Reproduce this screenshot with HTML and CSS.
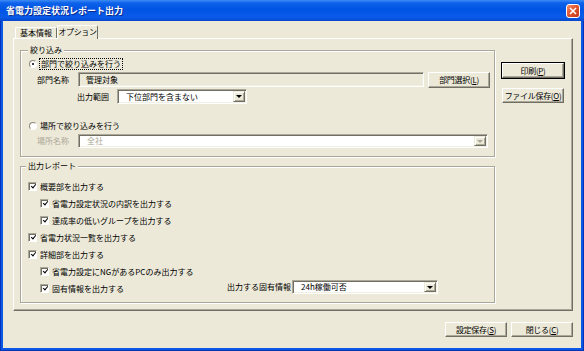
FILE: index.html
```html
<!DOCTYPE html>
<html lang="ja">
<head>
    <meta charset="UTF-8">
    <title>省電力設定状況レポート出力</title>
    <link rel="stylesheet" href="styles.css">
</head>
<body>
    <div class="window">
        <div class="titlebar">
            <span class="title">省電力設定状況レポート出力</span>
            <span class="close">
                <svg width="8" height="8" viewBox="0 0 8 8"><path d="M1 1 L7 7 M7 1 L1 7" stroke="#fff" stroke-width="1.6"/></svg>
            </span>
        </div>

        <div class="client">
            <!-- Tabs -->
            <div class="tabs">
                <div class="tab">基本情報</div>
                <div class="tab active">オプション</div>
            </div>

            <div class="panel">
                <div class="groups">
                    <!-- Filter -->
                    <div class="group group-filter">
                        <span class="legend">絞り込み</span>
                        <div class="radio-row">
                            <span class="radio checked"></span>
                            <span class="focus">部門で絞り込みを行う</span>
                        </div>
                        <div class="field-row">
                            <span class="label">部門名称</span>
                            <span class="field readonly w-dept">管理対象</span>
                            <span class="btn">部門選択(<u>L</u>)</span>
                        </div>
                        <div class="field-row range-row">
                            <span class="label w-range">出力範囲</span>
                            <span class="combo w-scope">
                                <span class="combo-text">下位部門を含まない</span>
                                <span class="drop"><i class="arrow"></i></span>
                            </span>
                        </div>
                        <div class="radio-row second">
                            <span class="radio"></span>
                            <span class="radio-text">場所で絞り込みを行う</span>
                        </div>
                        <div class="field-row place-row">
                            <span class="label disabled">場所名称</span>
                            <span class="combo disabled w-place">
                                <span class="combo-text">全社</span>
                                <span class="drop"><i class="arrow"></i></span>
                            </span>
                        </div>
                    </div>

                    <!-- Report -->
                    <div class="group group-report">
                        <span class="legend">出力レポート</span>
                        <div class="checks">
                            <div class="check-row"><span class="check"></span>概要部を出力する</div>
                            <div class="check-row sub"><span class="check"></span>省電力設定状況の内訳を出力する</div>
                            <div class="check-row sub"><span class="check"></span>達成率の低いグループを出力する</div>
                            <div class="check-row"><span class="check"></span>省電力状況一覧を出力する</div>
                            <div class="check-row"><span class="check"></span>詳細部を出力する</div>
                            <div class="check-row sub"><span class="check"></span>省電力設定にNGがあるPCのみ出力する</div>
                            <div class="check-row sub">
                                <span class="check"></span>固有情報を出力する
                                <span class="extra">
                                    <span class="label w-extra">出力する固有情報</span>
                                    <span class="combo w-info">
                                        <span class="combo-text">24h稼働可否</span>
                                        <span class="drop"><i class="arrow"></i></span>
                                    </span>
                                </span>
                            </div>
                        </div>
                    </div>
                </div>

                <div class="side">
                    <span class="btn default">印刷(<u>P</u>)</span>
                    <span class="btn">ファイル保存(<u>O</u>)</span>
                </div>
            </div>

            <div class="footer">
                <span class="btn">設定保存(<u>S</u>)</span>
                <span class="btn">閉じる(<u>C</u>)</span>
            </div>
        </div>
    </div>
</body>
</html>
```

FILE: styles.css
```css
* {
    box-sizing: border-box;
}
body {
    margin: 0;
    font-family: "Noto Sans CJK JP", "Noto Sans", sans-serif;
    font-size: 8px;
    line-height: 10px;
    color: #000;
    background: #ECE9D8;
}
.window {
    width: 584px;
    height: 351px;
    display: flex;
    flex-direction: column;
    background: #0B58E5;
    box-shadow: inset 1px 0 0 #0733B8, inset -1px 0 0 #0733B8, inset 0 -1px 0 #0733B8;
}
.titlebar {
    height: 21px;
    display: flex;
    align-items: center;
    padding: 0 4px 0 6px;
    background: linear-gradient(to bottom, #3D8DF5 0%, #0C62EA 14%, #0054E3 45%, #0A5BE9 82%, #0747CC 100%);
}
.title {
    flex: 1;
    color: #fff;
    font-size: 9px;
    font-weight: bold;
    text-shadow: 1px 1px 0 #0A2A8C;
}
.close {
    width: 14px;
    height: 14px;
    display: flex;
    align-items: center;
    justify-content: center;
    border: 1px solid #fff;
    border-radius: 3px;
    background: linear-gradient(135deg, #F0916E 0%, #E2552F 45%, #C2391B 100%);
}
.client {
    flex: 1;
    margin: 0 3px 3px;
    background: #ECE9D8;
    display: flex;
    flex-direction: column;
}

/* tabs */
.tabs {
    display: flex;
    align-items: flex-end;
    height: 13px;
    margin: 4px 0 0 12px;
}
.tab {
    height: 11px;
    width: 42px;
    text-align: center;
    white-space: nowrap;
    line-height: 10px;
    background: #ECE9D8;
    border: 1px solid #fff;
    border-bottom: none;
    border-right-color: #716F64;
    border-radius: 2px 2px 0 0;
}
.tab.active {
    width: 41px;
    height: 14px;
    margin-bottom: -1px;
    padding-top: 1px;
    letter-spacing: -0.4px;
    position: relative;
    z-index: 1;
}

/* panel */
.panel {
    height: 273px;
    margin: 0 8px 0 10px;
    padding: 11px 0 0 6px;
    display: flex;
    border: 1px solid;
    border-color: #fff #716F64 #716F64 #fff;
    box-shadow: inset -1px -1px 0 #ACA899;
}
.group {
    width: 475px;
    display: flex;
    flex-direction: column;
    border: 1px solid #ACA899;
    box-shadow: inset 1px 1px 0 #fff, 1px 1px 0 #fff;
}
.group-filter {
    height: 107px;
}
.group-report {
    height: 137px;
    margin-top: 9px;
}
.legend {
    align-self: flex-start;
    height: 10px;
    margin: -6px 0 0 7px;
    padding: 0 2px;
    background: #ECE9D8;
}
.group-report .legend {
    margin-left: 5px;
}

/* radios */
.radio-row {
    display: flex;
    align-items: center;
    height: 12px;
    margin-top: 3px;
    padding-left: 8px;
}
.radio-row.second {
    margin-top: 16px;
}
.radio {
    width: 8px;
    height: 8px;
    border-radius: 50%;
    background: #fff;
    border: 1px solid;
    border-color: #8C887A #fff #fff #8C887A;
    display: flex;
    align-items: center;
    justify-content: center;
}
.radio.checked::after {
    content: "";
    width: 2px;
    height: 2px;
    border-radius: 50%;
    background: #000;
}
.focus {
    margin-left: 2px;
    padding: 0 1px;
    border: 1px dotted #000;
    line-height: 10px;
}
.radio-text {
    margin-left: 3px;
}

/* fields */
.field-row {
    display: flex;
    align-items: flex-start;
    height: 16px;
    margin-top: 2px;
    padding-left: 16px;
}
.range-row {
    height: 15px;
    margin-top: 1px;
    padding-left: 56px;
}
.place-row {
    height: 14px;
}
.label {
    width: 41px;
    line-height: 15px;
}
.place-row .label {
    line-height: 14px;
}
.label.disabled {
    color: #ACA899;
}
.w-range {
    width: 40px;
}
.field,
.combo {
    height: 15px;
    display: flex;
    align-items: center;
    border: 1px solid;
    border-color: #ACA899 #fff #fff #ACA899;
    box-shadow: inset 1px 1px 0 #716F64, inset -1px -1px 0 #F1EFE2;
    background: #fff;
}
.field {
    padding-left: 7px;
}
.field.readonly {
    background: #ECE9D8;
}
.w-dept {
    width: 346px;
    margin-right: 4px;
}
.w-scope {
    width: 130px;
}
.w-place {
    width: 410px;
    height: 14px;
}
.w-info {
    width: 146px;
    height: 14px;
}
.combo {
    padding: 1px;
}
.combo-text {
    flex: 1;
    padding-left: 7px;
}
.combo.disabled .combo-text {
    color: #ACA899;
}
.drop {
    width: 12px;
    height: 100%;
    display: flex;
    align-items: center;
    justify-content: center;
    background: #ECE9D8;
    border: 1px solid;
    border-color: #ECE9D8 #716F64 #716F64 #ECE9D8;
    box-shadow: inset 1px 1px 0 #fff, inset -1px -1px 0 #ACA899;
}
.arrow {
    width: 0;
    height: 0;
    border-left: 3px solid transparent;
    border-right: 3px solid transparent;
    border-top: 3px solid #000;
}
.combo.disabled .arrow {
    border-top-color: #ACA899;
}

/* buttons */
.btn {
    width: 62px;
    height: 15px;
    display: flex;
    align-items: center;
    justify-content: center;
    white-space: nowrap;
    letter-spacing: -0.3px;
    background: #ECE9D8;
    border: 1px solid;
    border-color: #fff #716F64 #716F64 #fff;
    box-shadow: inset -1px -1px 0 #ACA899;
}
.field-row .btn {
    height: 16px;
}
.btn u {
    text-underline-offset: 1px;
}
.btn.default {
    outline: 1px solid #000;
}
.side {
    display: flex;
    flex-direction: column;
    gap: 10px;
    margin: 13px 0 0 7px;
}
.footer {
    display: flex;
    justify-content: flex-end;
    gap: 4px;
    margin-top: 11px;
    padding-right: 8px;
}

/* checkboxes */
.checks {
    margin-top: 7px;
}
.check-row {
    display: flex;
    align-items: center;
    height: 17px;
    padding-left: 7px;
}
.check-row.sub {
    padding-left: 19px;
}
.check {
    width: 9px;
    height: 9px;
    margin-right: 3px;
    background: #fff;
    border: 1px solid;
    border-color: #ACA899 #fff #fff #ACA899;
    box-shadow: inset 1px 1px 0 #716F64;
    display: flex;
    align-items: center;
    justify-content: center;
}
.check::after {
    content: "";
    width: 4px;
    height: 2px;
    margin: -2px 0 0 1px;
    border-left: 1.5px solid #000;
    border-bottom: 1.5px solid #000;
    transform: rotate(-50deg);
}
.extra {
    display: flex;
    align-self: flex-start;
    margin: 0 56px 0 auto;
}
.w-extra {
    width: 65px;
    line-height: 14px;
}
```
